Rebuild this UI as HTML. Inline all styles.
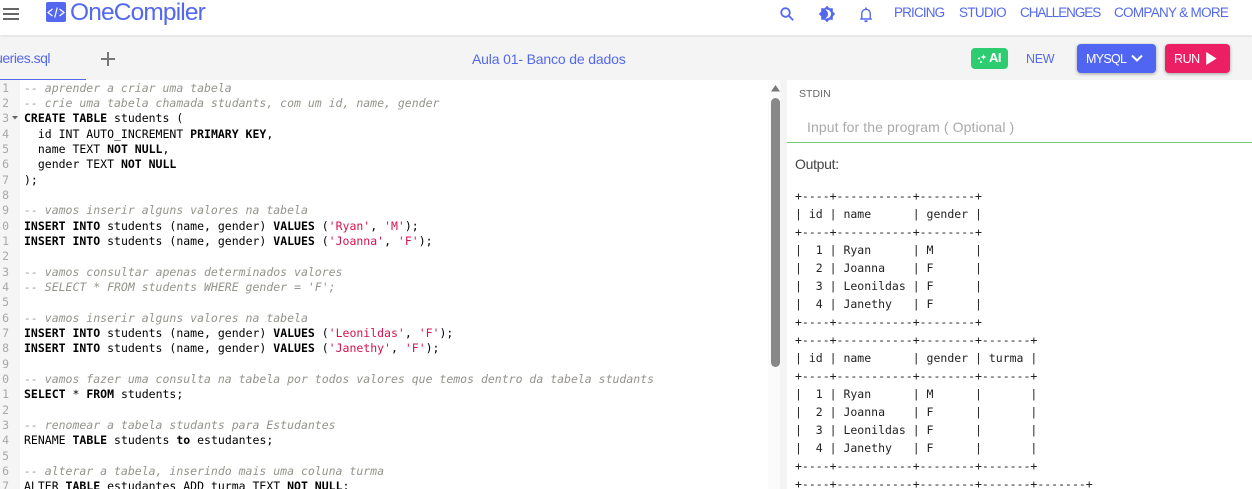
<!DOCTYPE html>
<html>
<head>
<meta charset="utf-8">
<style>
html,body{margin:0;padding:0;width:1252px;height:489px;overflow:hidden;background:#fff;}
body{position:relative;font-family:"Liberation Sans",sans-serif;}
.a{position:absolute;white-space:nowrap;}
.u{color:#5468ef;font-size:13.5px;line-height:18px;}
pre{margin:0;position:absolute;}
#code{left:24px;top:80.5px;font:11.5px/15.34px "DejaVu Sans Mono",monospace;color:#000;}
#code b{font-weight:bold;color:#000;}
#code i{color:#94938c;font-style:italic;}
#code s{color:#d5134f;text-decoration:none;}
#gut{left:0;top:80.5px;width:9px;text-align:right;font:11.5px/15.34px "DejaVu Sans Mono",monospace;color:#a8a8a8;overflow:hidden;height:409px;direction:rtl;}
#out{left:795px;top:187px;font:11.5px/18px "DejaVu Sans Mono",monospace;color:#222;}
</style>
</head>
<body>
<!-- toolbar -->
<div class="a" style="left:0;top:36px;width:1252px;height:44px;background:#f4f4f4;"></div>
<div class="a" style="left:0;top:0;width:1252px;height:35px;background:#fff;box-shadow:0 1px 2px rgba(0,0,0,.15);"></div>
<!-- hamburger -->
<div class="a" style="left:3px;top:8px;width:16px;height:2px;background:#666;"></div>
<div class="a" style="left:3px;top:13px;width:16px;height:2px;background:#666;"></div>
<div class="a" style="left:3px;top:18px;width:16px;height:2px;background:#666;"></div>
<!-- logo -->
<div class="a" style="left:46px;top:2px;width:20px;height:20px;background:#5468ef;border-radius:2px;"></div>
<svg class="a" style="left:46px;top:2px;" width="20" height="20" viewBox="0 0 20 20" fill="none" stroke="#fff" stroke-width="1.2"><path d="M6.5 7L2 10.5L6.5 14M13.5 7L18 10.5L13.5 14M11.3 5.5L8.7 15.5"/></svg>
<div class="a" style="left:70px;top:-2px;font-size:24.5px;line-height:30px;color:#5468ef;letter-spacing:-.85px;">OneCompiler</div>
<!-- nav icons -->
<svg class="a" style="left:779px;top:6px;" width="16" height="16" viewBox="0 0 16 16" fill="none" stroke="#5468ef" stroke-width="1.8"><circle cx="6.5" cy="6.5" r="4.3"/><path d="M9.8 9.8L14.2 14.2"/></svg>
<svg class="a" style="left:818px;top:5px;" width="18" height="18" viewBox="0 0 18 18"><path d="M9 .8L11.4 3.2H14.8V6.6L17.2 9L14.8 11.4V14.8H11.4L9 17.2L6.6 14.8H3.2V11.4L.8 9L3.2 6.6V3.2H6.6Z" fill="#5468ef"/><path d="M8.6 5A4 4 0 0 1 8.6 13A5.2 5.2 0 0 0 8.6 5Z" fill="#fff" stroke="#fff"/></svg>
<svg class="a" style="left:859px;top:6px;" width="14" height="17" viewBox="0 0 14 17" fill="none" stroke="#5468ef" stroke-width="1.4"><path d="M1.2 13H12.8M2.8 13V7.5A4.2 4.2 0 0 1 11.2 7.5V13"/><path d="M5.5 15.2H8.5" stroke-width="1.8"/><path d="M7 1.5V3" stroke-width="1.6"/></svg>
<!-- nav -->
<div class="a u" style="left:894px;top:4px;letter-spacing:-.85px;">PRICING</div>
<div class="a u" style="left:959px;top:4px;letter-spacing:-.67px;">STUDIO</div>
<div class="a u" style="left:1020px;top:4px;letter-spacing:-1.06px;">CHALLENGES</div>
<div class="a u" style="left:1114px;top:4px;letter-spacing:-.7px;">COMPANY &amp; MORE</div>
<!-- tab -->
<div class="a" style="left:-8px;top:50px;font-size:14px;line-height:16px;color:#5468ef;letter-spacing:-.5px;width:58px;text-align:right;">ueries.sql</div>
<div class="a" style="left:0;top:79px;width:86px;height:1px;background:#5468ef;"></div>
<div class="a" style="left:101px;top:57.5px;width:14px;height:2px;background:#777;"></div>
<div class="a" style="left:107px;top:51.5px;width:2px;height:14px;background:#777;"></div>
<div class="a" style="left:472px;top:51px;font-size:14px;line-height:17px;color:#5468ef;letter-spacing:-.16px;">Aula 01- Banco de dados</div>
<!-- AI -->
<div class="a" style="left:971px;top:48px;width:37px;height:21px;background:#2ecc71;border-radius:4px;"></div>
<svg class="a" style="left:976px;top:53px;" width="12" height="11" viewBox="0 0 12 11" fill="#fff"><path d="M7.5 1L8.4 3.2L10.5 4L8.4 4.8L7.5 7L6.6 4.8L4.5 4L6.6 3.2Z"/><circle cx="3" cy="5.5" r="1"/><circle cx="5" cy="9" r="1"/></svg>
<div class="a" style="left:989px;top:50px;font-size:13px;line-height:16px;font-weight:bold;color:#fff;letter-spacing:-.5px;">AI</div>
<div class="a" style="left:1026px;top:52px;font-size:12.5px;line-height:15px;color:#5468ef;letter-spacing:-.3px;">NEW</div>
<!-- mysql -->
<div class="a" style="left:1077px;top:44px;width:79px;height:29px;background:#5065f2;border-radius:4px;box-shadow:0 1px 3px rgba(0,0,0,.35);"></div>
<div class="a" style="left:1086px;top:52px;font-size:12.5px;line-height:15px;color:#fff;letter-spacing:-.7px;">MYSQL</div>
<svg class="a" style="left:1131px;top:54px;" width="12" height="9" viewBox="0 0 12 9" fill="none" stroke="#fff" stroke-width="2"><path d="M1 1.5L6 6.5L11 1.5"/></svg>
<!-- run -->
<div class="a" style="left:1165px;top:44px;width:65px;height:29px;background:#ec1f64;border-radius:4px;box-shadow:0 1px 3px rgba(0,0,0,.35);"></div>
<div class="a" style="left:1174px;top:52px;font-size:12.5px;line-height:15px;color:#fff;letter-spacing:-.45px;">RUN</div>
<svg class="a" style="left:1205px;top:51px;" width="12" height="15" viewBox="0 0 12 15"><path d="M1.5 1.5V13.5L11 7.5Z" fill="#fff" stroke="#fff" stroke-width=".6"/></svg>

<!-- editor -->
<div class="a" style="left:0;top:80px;width:20px;height:409px;background:#f5f5f5;"></div>
<pre id="gut">1
2
3
4
5
6
7
8
9
0
1
2
3
4
5
6
7
8
9
0
1
2
3
4
5
6
7</pre>
<svg class="a" style="left:12px;top:116px;" width="6" height="4" viewBox="0 0 6 4"><path d="M0 0H6L3 3.5Z" fill="#666"/></svg>
<pre id="code"><i>-- aprender a criar uma tabela</i>
<i>-- crie uma tabela chamada studants, com um id, name, gender</i>
<b>CREATE TABLE</b> students (
  id INT AUTO_INCREMENT <b>PRIMARY KEY</b>,
  name TEXT <b>NOT NULL</b>,
  gender TEXT <b>NOT NULL</b>
);

<i>-- vamos inserir alguns valores na tabela</i>
<b>INSERT INTO</b> students (name, gender) <b>VALUES</b> (<s>'Ryan'</s>, <s>'M'</s>);
<b>INSERT INTO</b> students (name, gender) <b>VALUES</b> (<s>'Joanna'</s>, <s>'F'</s>);

<i>-- vamos consultar apenas determinados valores</i>
<i>-- SELECT * FROM students WHERE gender = 'F';</i>

<i>-- vamos inserir alguns valores na tabela</i>
<b>INSERT INTO</b> students (name, gender) <b>VALUES</b> (<s>'Leonildas'</s>, <s>'F'</s>);
<b>INSERT INTO</b> students (name, gender) <b>VALUES</b> (<s>'Janethy'</s>, <s>'F'</s>);

<i>-- vamos fazer uma consulta na tabela por todos valores que temos dentro da tabela studants</i>
<b>SELECT</b> * <b>FROM</b> students;

<i>-- renomear a tabela studants para Estudantes</i>
RENAME <b>TABLE</b> students <b>to</b> estudantes;

<i>-- alterar a tabela, inserindo mais uma coluna turma</i>
ALTER <b>TABLE</b> estudantes ADD turma TEXT <b>NOT NULL</b>;</pre>
<!-- scrollbar -->
<div class="a" style="left:768px;top:80px;width:12px;height:409px;background:#fbfbfb;"></div>
<svg class="a" style="left:771px;top:85px;" width="9" height="7" viewBox="0 0 9 7"><path d="M0 6.5L4.5 0L9 6.5Z" fill="#777"/></svg>
<div class="a" style="left:771px;top:98px;width:9px;height:269px;background:#888;border-radius:4.5px;"></div>
<div class="a" style="left:780px;top:80px;width:7px;height:409px;background:#f4f4f4;"></div>
<!-- right -->
<div class="a" style="left:799px;top:87px;font-size:10.5px;line-height:14px;color:#666;letter-spacing:.05px;">STDIN</div>
<div class="a" style="left:807px;top:119px;font-size:14px;line-height:17px;color:#a9a9a9;letter-spacing:.1px;">Input for the program ( Optional )</div>
<div class="a" style="left:787px;top:142px;width:465px;height:1px;background:#72cb72;"></div>
<div class="a" style="left:795px;top:156px;font-size:14px;line-height:17px;color:#444;letter-spacing:-.3px;">Output:</div>
<pre id="out">+----+-----------+--------+
| id | name      | gender |
+----+-----------+--------+
|  1 | Ryan      | M      |
|  2 | Joanna    | F      |
|  3 | Leonildas | F      |
|  4 | Janethy   | F      |
+----+-----------+--------+
+----+-----------+--------+-------+
| id | name      | gender | turma |
+----+-----------+--------+-------+
|  1 | Ryan      | M      |       |
|  2 | Joanna    | F      |       |
|  3 | Leonildas | F      |       |
|  4 | Janethy   | F      |       |
+----+-----------+--------+-------+
+----+-----------+--------+-------+-------+</pre>
</body>
</html>
